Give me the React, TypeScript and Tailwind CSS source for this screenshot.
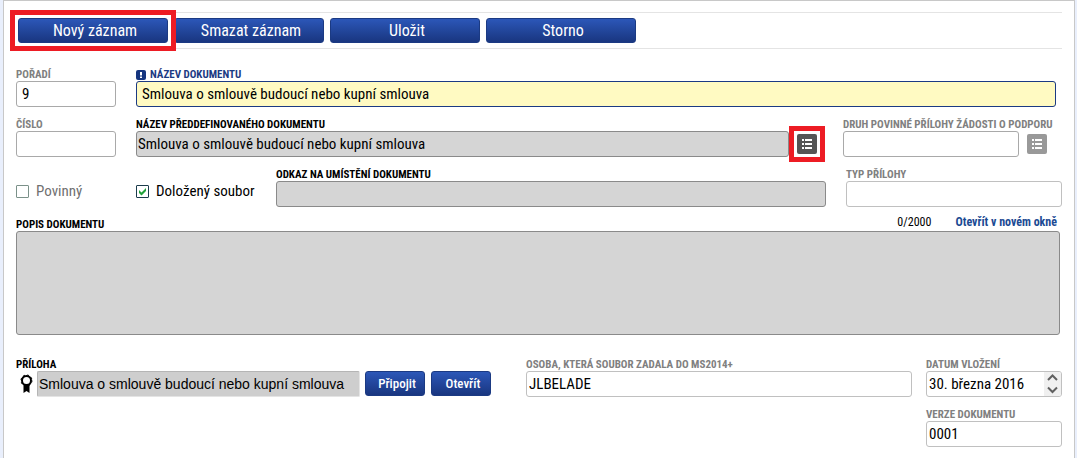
import { useState, type ReactNode } from 'react';
import { clsx } from 'clsx';

const FILE_NAME = 'Smlouva o smlouvě budoucí nebo kupní smlouva';

const ACTIONS = ['Nový záznam', 'Smazat záznam', 'Uložit', 'Storno'];

export default function App() {
  const [mandatory, setMandatory] = useState(false);
  const [attached, setAttached] = useState(true);
  const [description, setDescription] = useState('');

  return (
    <div className="bg-[#e9effc] pl-[3px] pr-[2px] font-['Roboto_Condensed','Liberation_Sans_Narrow',sans-serif] text-black">
      <div className="min-h-screen border-x border-t border-[#c8c8c8] bg-white px-3 pt-[11px] pb-[10px]">

        {/* Toolbar */}
        <div className="flex gap-[6px] border-y border-[#e4e4e4] px-[2px] py-[5px]">
          {ACTIONS.map((label, i) => (
            <div key={label} className={clsx(i === 0 && 'relative z-10 outline-[5px] outline-offset-[3px] outline-solid outline-[#ed1c24]')}>
              <button
                type="button"
                className="block h-[25px] w-[150px] rounded-[3px] border border-[#1b3a83] bg-linear-to-b from-[#2c57b8] to-[#193680] pl-1 text-[16px] leading-6 text-white"
              >
                {label}
              </button>
            </div>
          ))}
        </div>

        <form className="mt-[19px] flex flex-col gap-[11px]" onSubmit={e => e.preventDefault()}>
          <div className="flex gap-5 pr-[6px]">
            <Field id="order" label="Pořadí" muted className="w-[100px]">
              <TextInput id="order" value="9" className="border-[#a9a9a9] px-[5px]" />
            </Field>
            <Field id="name" label="Název dokumentu" required className="flex-1">
              <TextInput id="name" value={FILE_NAME} className="border-[#1b3a83] bg-[#fffac2] px-[5px]" />
            </Field>
          </div>

          <div className="flex">
            <Field id="number" label="Číslo" muted className="mr-5 w-[100px]">
              <TextInput id="number" className="border-[#a9a9a9] px-px" />
            </Field>
            <Field id="predefined" label="Název předdefinovaného dokumentu" className="flex-1">
              <TextInput id="predefined" value={FILE_NAME} className="border-[#8a8a8a] bg-[#d5d5d5] px-px" />
            </Field>
            <ListButton label="Vybrat dokument" highlighted />
            <Field id="kind" label="Druh povinné přílohy žádosti o podporu" muted className="ml-[18px] w-[176px]">
              <TextInput id="kind" className="border-[#a9a9a9] px-px" />
            </Field>
            <ListButton label="Vybrat druh přílohy" />
            <div className="w-[7px]" />
          </div>

          <div className="flex gap-5">
            <div className="flex w-[240px] pt-[13px]">
              <CheckField label="Povinný" muted checked={mandatory} onChange={setMandatory} />
              <CheckField label="Doložený soubor" checked={attached} onChange={setAttached} />
            </div>
            <Field id="link" label="Odkaz na umístění dokumentu" className="flex-1">
              <TextInput id="link" className="border-[#8a8a8a] bg-[#d5d5d5] px-px" />
            </Field>
            <Field id="type" label="Typ přílohy" muted className="w-[216px]">
              <TextInput id="type" className="border-[#c0c0c0] px-px" />
            </Field>
          </div>

          <div className="pr-[2px]">
            <div className="flex h-[13px] items-center justify-between">
              <label htmlFor="description" className="text-[11px] leading-[13px] font-bold uppercase">Popis dokumentu</label>
              <div className="flex gap-6 pr-[3px] pb-1 text-[12px] leading-[13px]">
                <span>{description.length}/2000</span>
                <a href="#description" className="font-bold text-[#1b4a93]">Otevřít v novém okně</a>
              </div>
            </div>
            <textarea
              id="description"
              maxLength={2000}
              value={description}
              onChange={e => setDescription(e.target.value)}
              className="block h-[104px] w-full resize-none rounded-[3px] border border-[#8a8a8a] bg-[#d5d5d5] p-1 text-[15px]"
            />
          </div>

          <div className="mt-3 flex gap-[35px]">
            <Field id="file" label="Příloha" className="w-[475px]">
              <div className="flex items-start">
                <SealIcon />
                <input
                  id="file"
                  readOnly
                  value={FILE_NAME}
                  className="h-[26px] min-w-0 flex-1 rounded-[2px] border border-[#b5b5b5] border-r-[#e4e4e4] border-b-[#e4e4e4] bg-[#cecece] px-px font-['Liberation_Sans',Arial,sans-serif] text-[14px]"
                />
                <SmallButton className="mr-[6px] ml-[5px]">Připojit</SmallButton>
                <SmallButton>Otevřít</SmallButton>
              </div>
            </Field>
            <div className="flex flex-1 items-start gap-[14px]">
              <Field id="person" label="Osoba, která soubor zadala do MS2014+" muted className="flex-1">
                <TextInput id="person" value="JLBELADE" className="border-[#c0c0c0] px-[2px]" />
              </Field>
              <div className="flex w-[136px] flex-col gap-[11px]">
                <Field id="date" label="Datum vložení" muted>
                  <div className="flex h-[26px] overflow-hidden rounded-[3px] border border-[#c0c0c0]">
                    <input id="date" defaultValue="30. března 2016" className="min-w-0 flex-1 px-[2px] text-[15px] outline-none" />
                    <div className="flex w-[17px] flex-col bg-[#f0f0f0] text-[#606060]">
                      <Stepper label="Další den" d="M1 6 5.500 1.500 10 6" />
                      <Stepper label="Předchozí den" d="M1 1.500 5.500 6 10 1.500" />
                    </div>
                  </div>
                </Field>
                <Field id="version" label="Verze dokumentu" muted>
                  <TextInput id="version" value="0001" className="border-[#c0c0c0] px-[2px]" />
                </Field>
              </div>
            </div>
          </div>
        </form>
      </div>
    </div>
  );
}

/* ─── Form pieces ─── */
interface FieldProps {
  id: string;
  label: string;
  muted?: boolean;
  required?: boolean;
  className?: string;
  children: ReactNode;
}

function Field({ id, label, muted, required, className, children }: FieldProps) {
  return (
    <div className={clsx('min-w-0', className)}>
      <label
        htmlFor={id}
        className={clsx(
          'flex h-[13px] items-center gap-1 text-[11px] leading-[13px] font-bold whitespace-nowrap uppercase',
          required ? 'text-[#1b3a83]' : muted ? 'text-[#808080]' : 'text-black',
        )}
      >
        {required && (
          <svg viewBox="0 0 10 10" className="h-[10px] w-[10px]" aria-hidden="true">
            <rect width="10" height="10" rx="2" fill="#15357f" />
            <path d="M4 2h2v3.500H4zM4 6.500h2v1.500H4z" fill="#fff" />
          </svg>
        )}
        {label}
      </label>
      {children}
    </div>
  );
}

function TextInput({ id, value = '', className }: { id: string; value?: string; className?: string }) {
  return (
    <input
      id={id}
      defaultValue={value}
      className={clsx('block h-[26px] w-full rounded-[3px] border text-[15px] leading-6 outline-none', className)}
    />
  );
}

interface CheckFieldProps {
  label: string;
  muted?: boolean;
  checked: boolean;
  onChange: (checked: boolean) => void;
}

function CheckField({ label, muted, checked, onChange }: CheckFieldProps) {
  return (
    <label className={clsx('flex h-5 w-[120px] items-center gap-[7px] text-[15px] leading-5 whitespace-nowrap', muted && 'text-[#707070]')}>
      <span className="grid shrink-0">
        <input
          type="checkbox"
          checked={checked}
          onChange={e => onChange(e.target.checked)}
          className={clsx('col-start-1 row-start-1 h-[13px] w-[13px] appearance-none rounded-[1px] border bg-white', muted ? 'border-[#7b9189]' : 'border-[#1c3c4c]')}
        />
        {checked && (
          <svg viewBox="0 0 13 13" className="pointer-events-none col-start-1 row-start-1 h-[13px] w-[13px]" aria-hidden="true">
            <path d="M3 5v3l2.500 2.500L10 6V3L5.500 7.500z" fill="#21a13a" />
          </svg>
        )}
      </span>
      {label}
    </label>
  );
}

function ListButton({ label, highlighted }: { label: string; highlighted?: boolean }) {
  return (
    <div className={clsx('mx-2 mt-4 h-5 w-5 shrink-0', highlighted && 'outline-[5px] outline-offset-[3px] outline-solid outline-[#ed1c24]')}>
      <button type="button" aria-label={label} className={clsx('block h-5 w-5 rounded-[2px]', highlighted ? 'bg-[#555]' : 'bg-[#999]')}>
        <svg viewBox="0 0 20 20" className="h-5 w-5" fill="#fff" aria-hidden="true">
          <path d="M5 5h2v2H5zM8 5h7v2H8zM5 9h2v2H5zM8 9h7v2H8zM5 13h2v2H5zM8 13h7v2H8z" />
        </svg>
      </button>
    </div>
  );
}

function SmallButton({ className, children }: { className?: string; children: ReactNode }) {
  return (
    <button
      type="button"
      className={clsx('h-[25px] w-[60px] rounded-[3px] border border-[#1b3a83] bg-linear-to-b from-[#2c57b8] to-[#193680] pl-1 text-[13px] font-medium text-white', className)}
    >
      {children}
    </button>
  );
}

function Stepper({ label, d }: { label: string; d: string }) {
  return (
    <button type="button" aria-label={label} className="flex h-3 w-full items-center justify-center">
      <svg viewBox="0 0 11 8" className="h-2 w-[11px]" fill="none" stroke="currentColor" strokeWidth="2" aria-hidden="true">
        <path d={d} />
      </svg>
    </button>
  );
}

function SealIcon() {
  return (
    <svg viewBox="0 0 13 20" className="mt-[3px] mr-1 ml-1 h-5 w-[13px] shrink-0" aria-hidden="true">
      <path d="M3.500 10h6v9L6.500 17l-3 2z" fill="#000" />
      <circle cx="6.500" cy="6.500" r="4.500" fill="#fff" stroke="#000" strokeWidth="2" />
      <circle cx="6.500" cy="6.500" r="5.500" fill="none" stroke="#000" strokeDasharray="2 2.320" />
    </svg>
  );
}
